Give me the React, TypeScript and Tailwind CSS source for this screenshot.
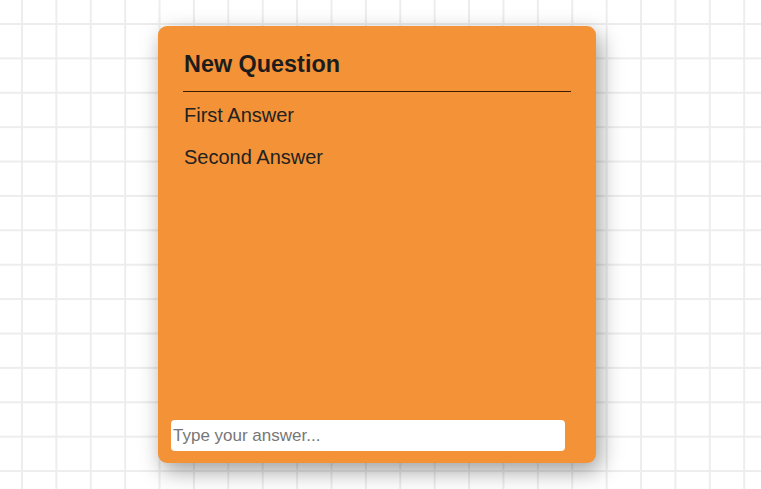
import React from "react";

const answers = ["First Answer", "Second Answer"];

export default function App() {
  return (
    <div
      className="w-[761px] h-[489px] overflow-hidden bg-white bg-[linear-gradient(to_right,#ededed_2px,transparent_2px),linear-gradient(to_bottom,#ededed_2px,transparent_2px)] bg-[size:34.4px_34.4px] bg-[position:21px_23px]"
      style={{ fontFamily: '"Liberation Sans", Arial, sans-serif' }}
    >
      <div className="ml-[158px] mt-[26px] w-[438px] h-[437px] rounded-[9px] bg-[#f39237] shadow-[4px_8px_22px_rgba(0,0,0,0.38)] px-[13px] pt-[25px] pb-[12px] flex flex-col justify-between">
        {/* Question + answers */}
        <div className="px-[12px]">
          <h1 className="text-[23.4px] leading-[27px] font-bold text-[#1c1c1c] pb-[13px] border-b border-[#3b1c00] pl-px">
            New Question
          </h1>
          <ul className="mt-[12px] flex flex-col gap-[19px]">
            {answers.map((a) => (
              <li key={a} className="text-[20px] leading-[23px] text-[#222] pl-px">
                {a}
              </li>
            ))}
          </ul>
        </div>

        {/* Answer input */}
        <input
          type="text"
          autoFocus
          placeholder="Type your answer..."
          className="w-[394px] h-[31px] rounded-[4px] bg-white px-[2px] text-[17px] text-[#222] placeholder:text-[#777] outline-none caret-black"
        />
      </div>
    </div>
  );
}
